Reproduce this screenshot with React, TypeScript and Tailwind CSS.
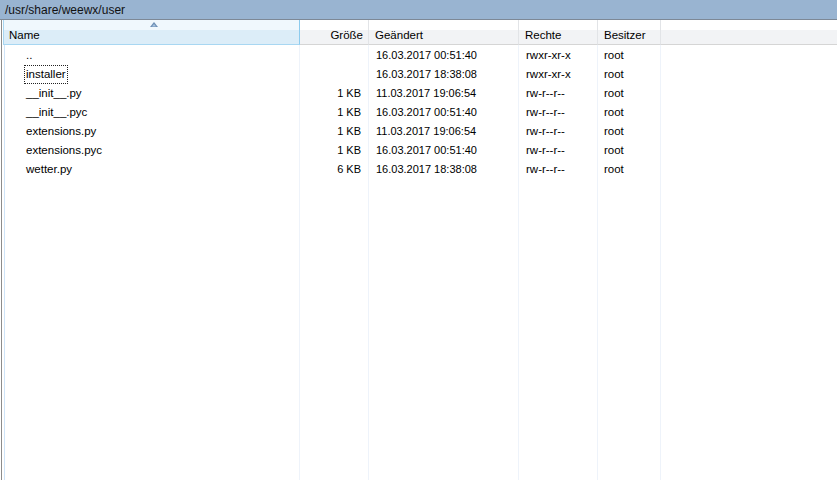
const FILES = [
  { name: '..', size: '', changed: '16.03.2017 00:51:40', perms: 'rwxr-xr-x', owner: 'root' },
  { name: 'installer', size: '', changed: '16.03.2017 18:38:08', perms: 'rwxr-xr-x', owner: 'root', focus: true },
  { name: '__init__.py', size: '1 KB', changed: '11.03.2017 19:06:54', perms: 'rw-r--r--', owner: 'root' },
  { name: '__init__.pyc', size: '1 KB', changed: '16.03.2017 00:51:40', perms: 'rw-r--r--', owner: 'root' },
  { name: 'extensions.py', size: '1 KB', changed: '11.03.2017 19:06:54', perms: 'rw-r--r--', owner: 'root' },
  { name: 'extensions.pyc', size: '1 KB', changed: '16.03.2017 00:51:40', perms: 'rw-r--r--', owner: 'root' },
  { name: 'wetter.py', size: '6 KB', changed: '16.03.2017 18:38:08', perms: 'rw-r--r--', owner: 'root' },
];

export default function App() {
  return (
    <div
      className="w-[837px] h-[480px] flex flex-col bg-white overflow-hidden text-black"
      style={{ fontFamily: '"Liberation Sans", Arial, sans-serif' }}
    >
      {/* Path bar */}
      <div className="h-[20px] shrink-0 bg-[#99b4d1] border-b border-[#7d8896] pl-[5px] flex items-center text-[12px] text-[#111]">
        /usr/share/weewx/user
      </div>

      <div className="flex flex-1 min-h-0">
        <div className="w-px ml-px bg-[#8c8c8c]" />
        <div className="w-px" />

        <div className="flex-1 grid grid-cols-[297px_69px_150px_79px_63px_1fr] grid-rows-[25px_1fr]">
          {/* Header */}
          <div className="relative border border-t-0 border-[#a8d7f2] border-r-[#8ccbee] bg-[linear-gradient(#f0f8fd_0%,#f0f8fd_42%,#dcedf8_43%,#dcedf8_100%)] pl-[5px] pt-[7px] text-[11.5px]">
            Name
            <svg className="absolute left-[146px] top-[2px]" width="8" height="5" viewBox="0 0 8 5">
              <polygon points="4,0 8,5 0,5" fill="#6d8fb5" />
              <polygon points="4,2 6,4.5 2,4.5" fill="#a8c4e0" />
            </svg>
          </div>
          <HeaderCell label="Größe" right />
          <HeaderCell label="Geändert" />
          <HeaderCell label="Rechte" />
          <HeaderCell label="Besitzer" />
          <div className="border-b border-[#d5d5d5] bg-[linear-gradient(#ffffff_0%,#ffffff_42%,#f2f3f5_43%,#f2f3f5_100%)]" />

          {/* Body columns */}
          <div className="border-l border-[#cfe4f8] ml-px border-r border-r-[#eef3fa] pt-[1px] pl-[21px]">
            {FILES.map((f) => (
              <div key={f.name} className="h-[19px] flex items-center text-[11.5px]">
                <span className={f.focus ? 'outline outline-1 outline-dotted outline-[#222] px-px -ml-px leading-[17px]' : ''}>
                  {f.name}
                </span>
              </div>
            ))}
          </div>
          <div className="border-r border-[#eef3fa] pt-[1px] pr-[7px]">
            {FILES.map((f) => (
              <div key={f.name} className="h-[19px] flex items-center justify-end text-[11px]">
                {f.size}
              </div>
            ))}
          </div>
          <div className="border-r border-[#eef3fa] pt-[1px] pl-[7px]">
            {FILES.map((f) => (
              <div key={f.name} className="h-[19px] flex items-center text-[11px]">
                {f.changed}
              </div>
            ))}
          </div>
          <div className="border-r border-[#eef3fa] pt-[1px] pl-[7px]">
            {FILES.map((f) => (
              <div key={f.name} className="h-[19px] flex items-center text-[11.5px]">
                {f.perms}
              </div>
            ))}
          </div>
          <div className="border-r border-[#eef3fa] pt-[1px] pl-[6px]">
            {FILES.map((f) => (
              <div key={f.name} className="h-[19px] flex items-center text-[11.5px]">
                {f.owner}
              </div>
            ))}
          </div>
          <div />
        </div>
      </div>
    </div>
  );
}

function HeaderCell({ label, right }: { label: string; right?: boolean }) {
  return (
    <div
      className={`border-b border-r border-[#d5d5d5] border-r-[#e2e4e7] bg-[linear-gradient(#ffffff_0%,#ffffff_42%,#f2f3f5_43%,#f2f3f5_100%)] pt-[7px] text-[11.5px] ${
        right ? 'text-right pr-[5px]' : 'pl-[6px]'
      }`}
    >
      {label}
    </div>
  );
}
